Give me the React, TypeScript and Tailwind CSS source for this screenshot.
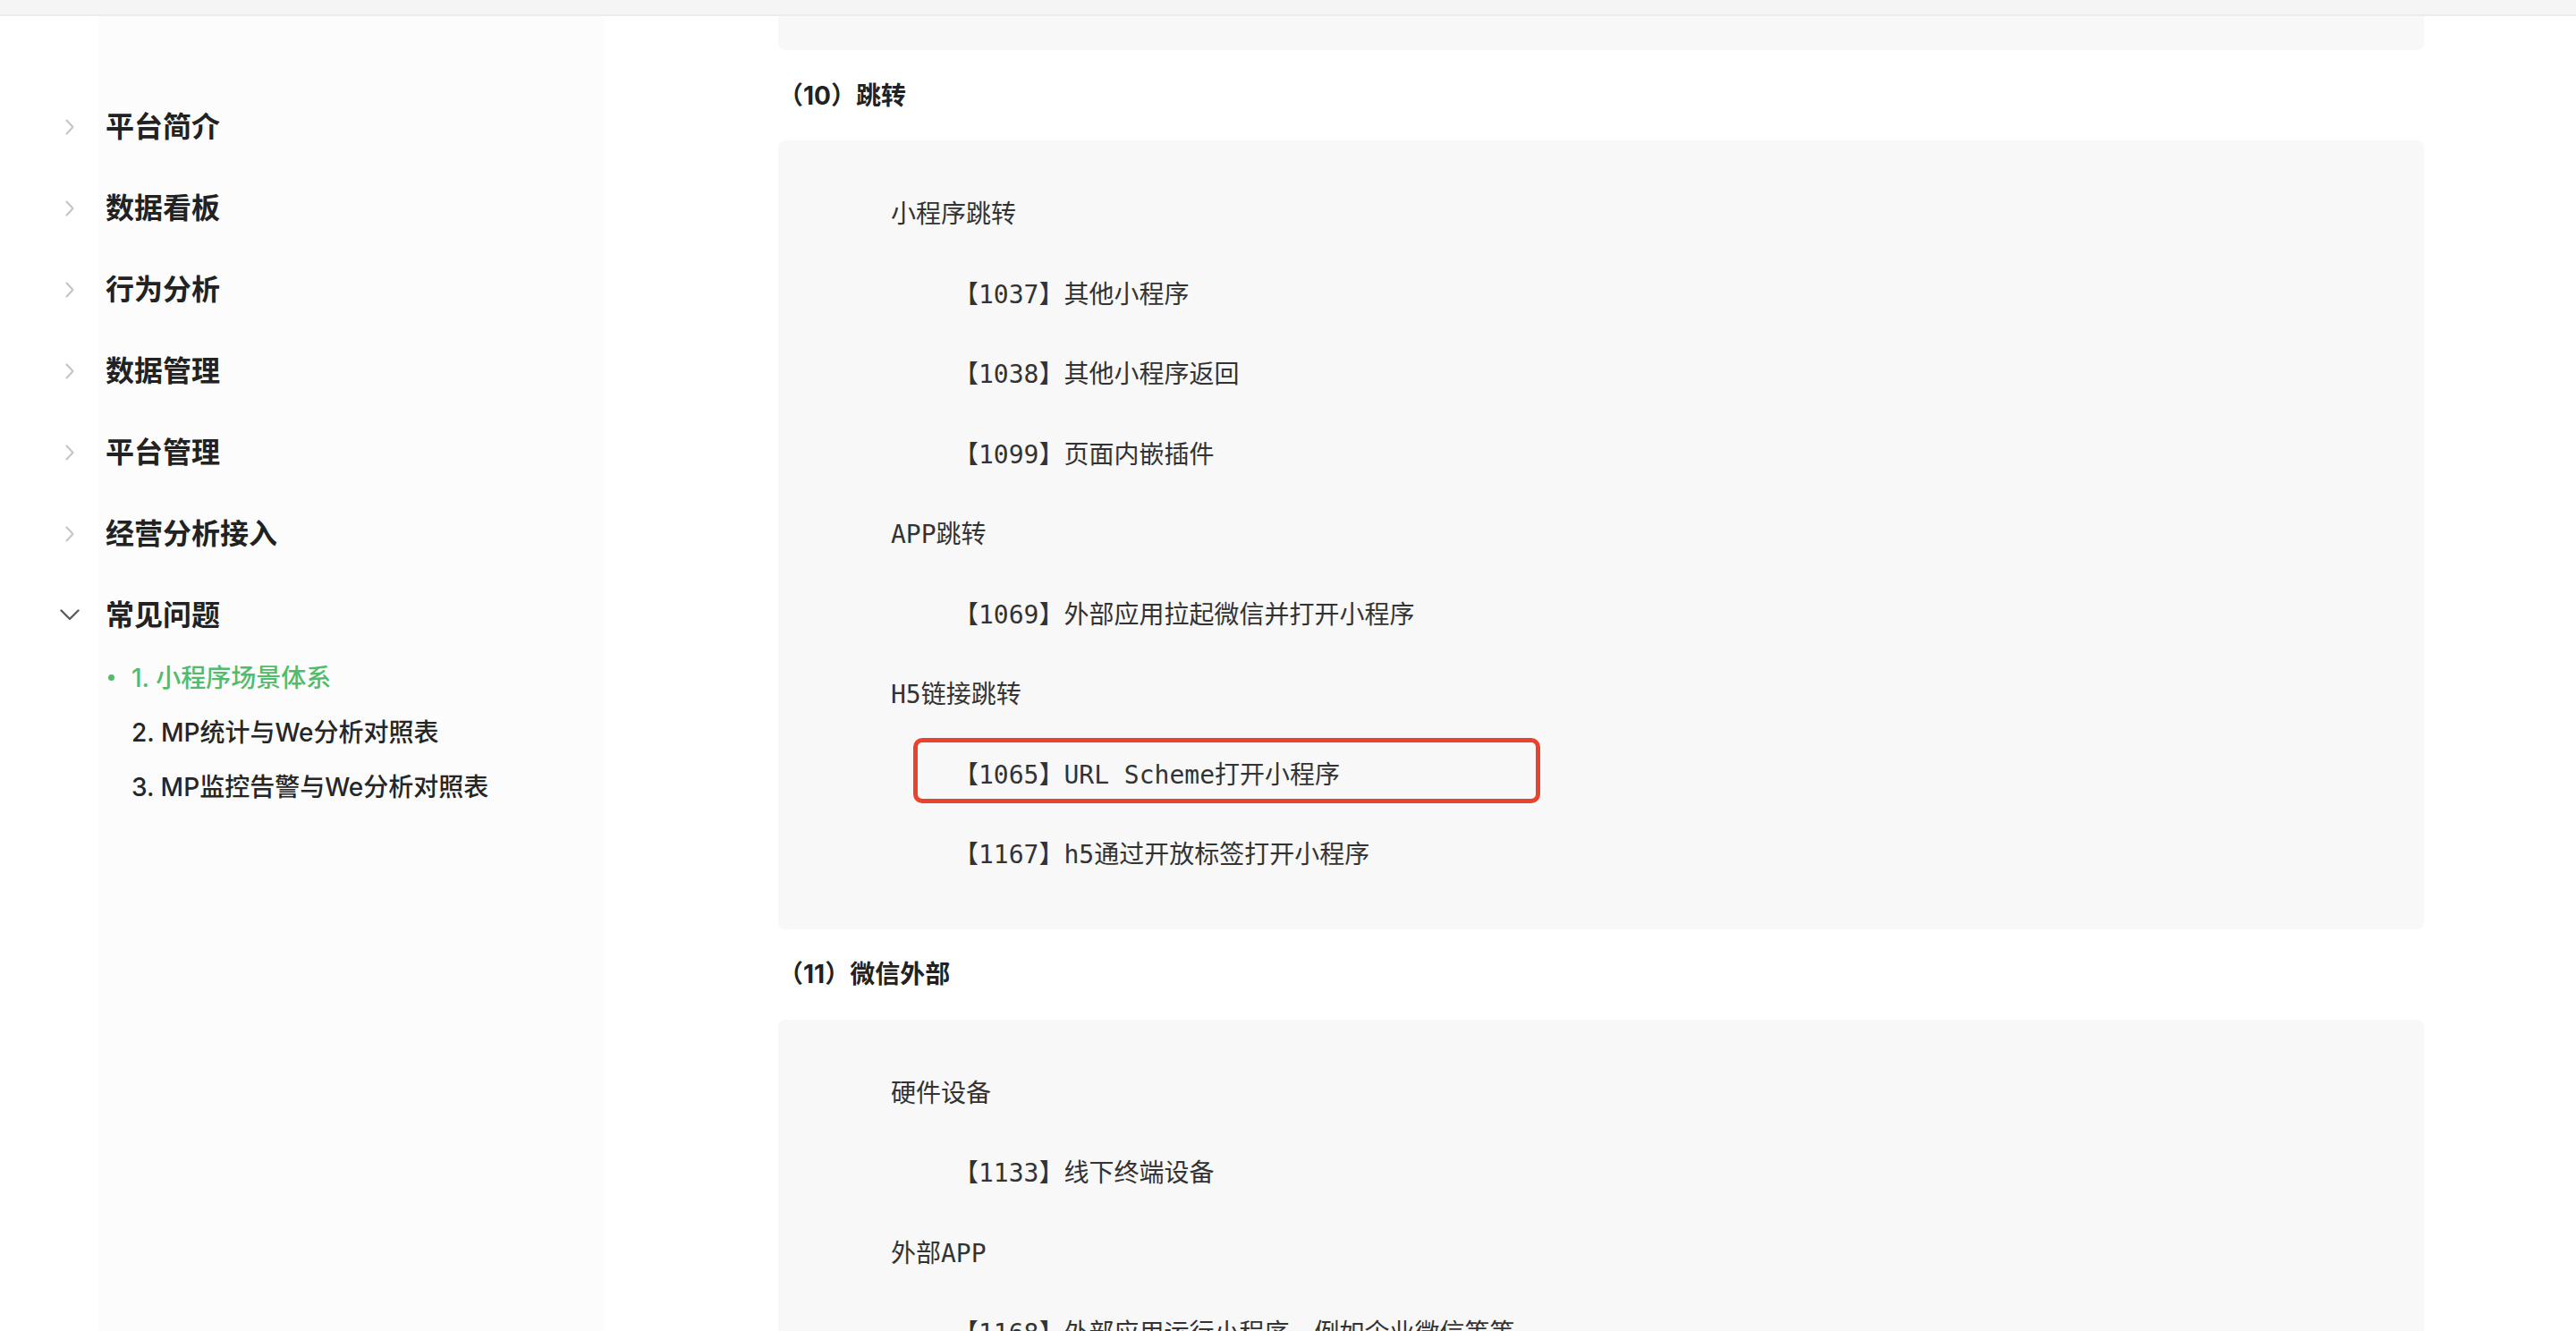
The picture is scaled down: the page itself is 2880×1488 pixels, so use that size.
import React from "react";

const navItems = ["平台简介", "数据看板", "行为分析", "数据管理", "平台管理", "经营分析接入"];

const faqItems = [
  { label: "1. 小程序场景体系", active: true },
  { label: "2. MP统计与We分析对照表", active: false },
  { label: "3. MP监控告警与We分析对照表", active: false },
];

const jumpLines = [
  { text: "小程序跳转", level: 1 },
  { text: "【1037】其他小程序", level: 2 },
  { text: "【1038】其他小程序返回", level: 2 },
  { text: "【1099】页面内嵌插件", level: 2 },
  { text: "APP跳转", level: 1 },
  { text: "【1069】外部应用拉起微信并打开小程序", level: 2 },
  { text: "H5链接跳转", level: 1 },
  { text: "【1065】URL Scheme打开小程序", level: 2 },
  { text: "【1167】h5通过开放标签打开小程序", level: 2 },
];

const outsideLines = [
  { text: "硬件设备", level: 1 },
  { text: "【1133】线下终端设备", level: 2 },
  { text: "外部APP", level: 1 },
  { text: "【1168】外部应用运行小程序，例如企业微信等等", level: 2 },
  { text: "【1170】外部应用运行小程序", level: 2 },
];

const ChevronRight = () => (
  <svg width="10" height="18" viewBox="0 0 10 18" fill="none">
    <path d="M1.5 1.5 L8.5 9 L1.5 16.5" stroke="#c4c4c4" strokeWidth="2" strokeLinecap="round" strokeLinejoin="round" />
  </svg>
);

const ChevronDown = () => (
  <svg width="22" height="13" viewBox="0 0 22 13" fill="none">
    <path d="M1.5 1.5 L11 11 L20.5 1.5" stroke="#5c5c5c" strokeWidth="2.4" strokeLinecap="round" strokeLinejoin="round" />
  </svg>
);

const CodeRow = ({ text, level }: { text: string; level: number }) => (
  <div
    className={`h-[89.5px] leading-[89.5px] whitespace-pre ${level === 1 ? "pl-[126px]" : "pl-[196px]"}`}
  >
    {text}
  </div>
);

const App = () => {
  return (
    <div className="w-[2880px] h-[1488px] overflow-hidden bg-white flex flex-col font-['Inter','Noto_Sans_CJK_SC',sans-serif]">
      <div className="h-[18px] shrink-0 bg-[#f5f5f5] border-b-2 border-[#ececec]" />

      <div className="flex flex-1 min-h-0">
        {/* sidebar */}
        <aside className="w-[676px] shrink-0 bg-[linear-gradient(to_right,#ffffff_110px,#fcfcfc_110px)] pt-[78px] pl-[66px]">
          {navItems.map((item) => (
            <div key={item} className="h-[91px] flex items-center">
              <div className="w-[24px] flex justify-center">
                <ChevronRight />
              </div>
              <span className="ml-[28px] text-[32px] font-semibold text-[#222]">{item}</span>
            </div>
          ))}
          <div className="h-[91px] flex items-center">
            <div className="w-[24px] flex justify-center">
              <ChevronDown />
            </div>
            <span className="ml-[28px] text-[32px] font-semibold text-[#222]">常见问题</span>
          </div>
          <div className="-mt-[6px]">
            {faqItems.map((sub) => (
              <div key={sub.label} className="h-[61px] flex items-center pl-[55px]">
                <span
                  className={`w-[7px] h-[7px] rounded-full ${sub.active ? "bg-[#51bd6c]" : "bg-transparent"}`}
                />
                <span
                  className={`ml-[19px] text-[28px] font-medium ${sub.active ? "text-[#51bd6c]" : "text-[#262626]"}`}
                >
                  {sub.label}
                </span>
              </div>
            ))}
          </div>
        </aside>

        {/* content */}
        <main className="flex-1 pl-[194px]">
          <div className="w-[1840px]">
            <div className="h-[38px] bg-[#f8f8f8] rounded-b-lg" />

            <h3 className="h-[101px] flex items-center text-[28px] font-bold text-[#222]">（10）跳转</h3>

            <div className="relative bg-[#f8f8f8] rounded-lg py-[38px] text-[28px] text-[#333] font-['DejaVu_Sans_Mono','Noto_Sans_CJK_SC',monospace]">
              {jumpLines.map((line, i) => (
                <CodeRow key={i} text={line.text} level={line.level} />
              ))}
              <div className="absolute left-[151px] top-[668px] w-[701px] h-[73px] border-[5px] border-[#e94330] rounded-[10px]" />
            </div>

            <h3 className="h-[101px] flex items-center text-[28px] font-bold text-[#222]">（11）微信外部</h3>

            <div className="bg-[#f8f8f8] rounded-lg py-[38px] text-[28px] text-[#333] font-['DejaVu_Sans_Mono','Noto_Sans_CJK_SC',monospace]">
              {outsideLines.map((line, i) => (
                <CodeRow key={i} text={line.text} level={line.level} />
              ))}
            </div>
          </div>
        </main>
      </div>
    </div>
  );
};

export default App;
